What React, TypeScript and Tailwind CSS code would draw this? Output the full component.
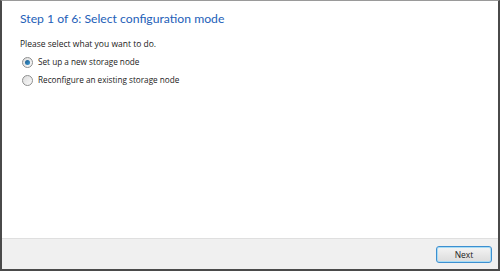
import React from 'react';

function Radio({ checked }: { checked?: boolean }) {
  return (
    <span className="relative flex h-[11px] w-[11px] items-center justify-center rounded-full border border-[#8e8f8f] bg-gradient-to-br from-[#dcdcdc] to-[#fbfbfb]">
      {checked && (
        <span className="h-[5px] w-[5px] rounded-full bg-gradient-to-br from-[#1c5a8c] to-[#3b9ad4]" />
      )}
    </span>
  );
}

export default function App() {
  const options = [
    { label: 'Set up a new storage node', checked: true },
    { label: 'Reconfigure an existing storage node', checked: false },
  ];

  return (
    <div
      className="flex h-[271px] w-[500px] flex-col border-t border-l-2 border-r-2 border-b-2 border-t-[#9a9a9a] border-l-[#4a4a4a] border-r-[#4a4a4a] border-b-[#4a4a4a] bg-white"
      style={{ fontFamily: '"Open Sans", "Noto Sans", sans-serif' }}
    >
      {/* Content */}
      <div className="flex-1 px-[18px] pt-[8px]">
        <h1 className="font-['Lato',sans-serif] text-[12.2px] leading-[20px] text-[#2360b8]">Step 1 of 6: Select configuration mode</h1>
        <p className="mt-[9px] text-[8.5px] leading-[12px] text-[#222]">Please select what you want to do.</p>
        <div className="mt-[6px] flex flex-col gap-[6px]">
          {options.map(o => (
            <label key={o.label} className="flex items-center gap-[5px] pl-[2px] text-[8.2px] leading-[12px] text-[#222]">
              <Radio checked={o.checked} />
              {o.label}
            </label>
          ))}
        </div>
      </div>

      {/* Footer */}
      <div className="flex h-[31px] items-center justify-end border-t border-[#dfdfdf] bg-[#f0f0f0] pr-[6px]">
        <button className="h-[17px] w-[56px] rounded-[3px] border border-[#3c8fd0] bg-gradient-to-b from-[#f4f4f4] to-[#dcdcdc] text-[8.5px] leading-[15px] text-[#222] shadow-[inset_0_0_0_1px_#a8dcf5]">
          Next
        </button>
      </div>
    </div>
  );
}
